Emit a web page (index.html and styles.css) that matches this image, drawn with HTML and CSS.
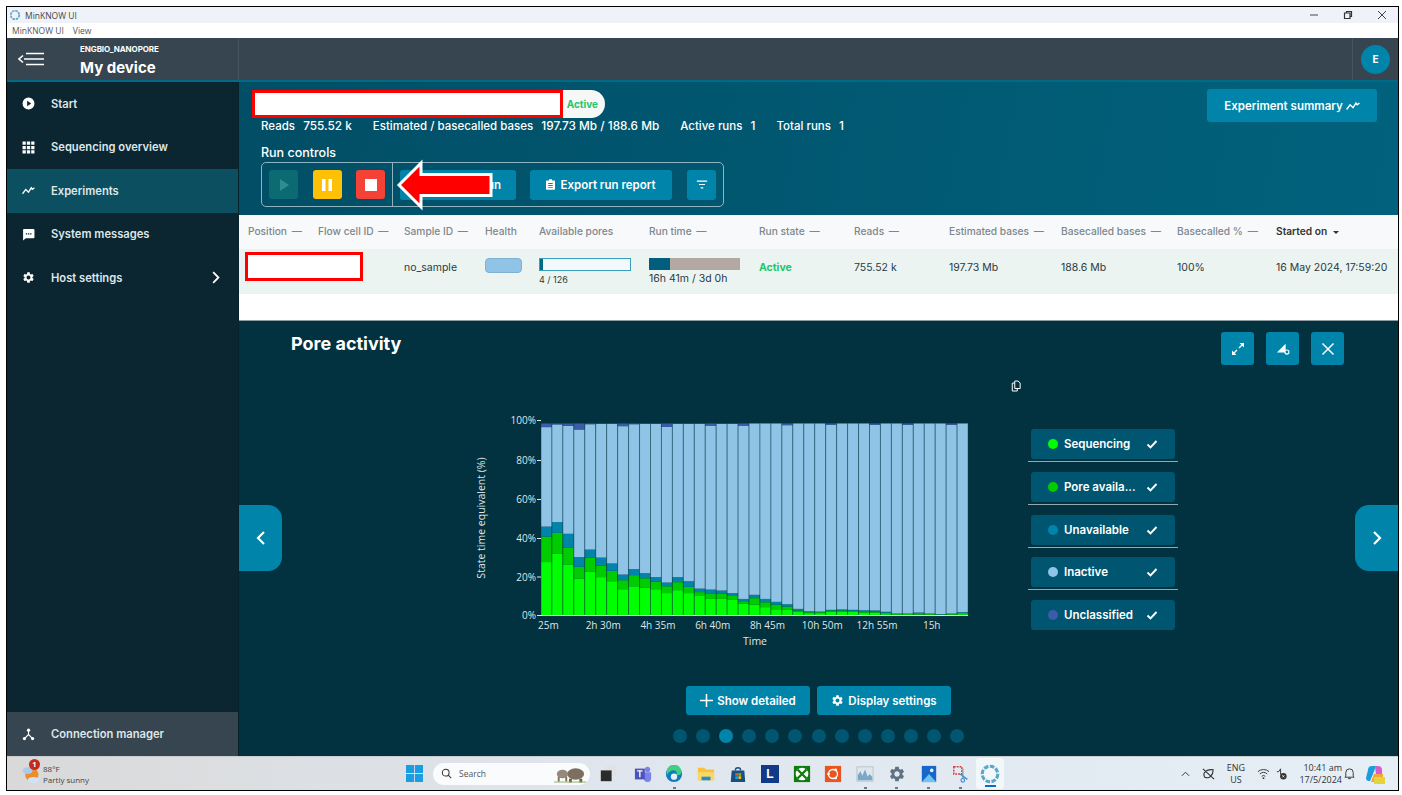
FILE: index.html
```html
<!DOCTYPE html>
<html lang="en">
<head>
<meta charset="UTF-8">
<meta name="viewport" content="width=device-width, initial-scale=1.0">
<title>MinKNOW UI</title>
<link rel="stylesheet" href="styles.css">
</head>
<body>

<svg class="sprites" aria-hidden="true">
  <symbol id="i-gear" viewBox="0 0 24 24"><path d="M19.14 12.94c.04-.3.06-.61.06-.94 0-.32-.02-.64-.07-.94l2.03-1.58c.18-.14.23-.41.12-.61l-1.92-3.32c-.12-.22-.37-.29-.59-.22l-2.39.96c-.5-.38-1.03-.7-1.62-.94l-.36-2.54c-.04-.24-.24-.41-.48-.41h-3.84c-.24 0-.43.17-.47.41l-.36 2.54c-.59.24-1.13.57-1.62.94l-2.39-.96c-.22-.08-.47 0-.59.22L2.74 8.87c-.12.21-.08.47.12.61l2.03 1.58c-.05.3-.09.63-.09.94s.02.64.07.94l-2.03 1.58c-.18.14-.23.41-.12.61l1.92 3.32c.12.22.37.29.59.22l2.39-.96c.5.38 1.03.7 1.62.94l.36 2.54c.05.24.24.41.48.41h3.84c.24 0 .44-.17.47-.41l.36-2.54c.59-.24 1.13-.56 1.62-.94l2.39.96c.22.08.47 0 .59-.22l1.92-3.32c.12-.22.07-.47-.12-.61l-2.01-1.58zM12 15.6c-1.98 0-3.6-1.62-3.6-3.6s1.62-3.6 3.6-3.6 3.6 1.62 3.6 3.6-1.62 3.6-3.6 3.6z"/></symbol>
  <symbol id="i-trend" viewBox="0 0 24 24"><path d="M1 18l6-8 5 5 5-8 2 3 4-3" fill="none" stroke="currentColor" stroke-width="2.4"/></symbol>
  <symbol id="i-check" viewBox="0 0 24 24"><path d="M3 13l6 6L21 6" fill="none" stroke="currentColor" stroke-width="3.8"/></symbol>
  <symbol id="i-ring" viewBox="0 0 24 24"><circle cx="12" cy="12" r="8.5" fill="none" stroke="#5ba9c9" stroke-width="3.4" stroke-dasharray="5 1.6"/></symbol>
</svg>

<div class="window">

  <div class="titlebar">
    <svg class="title-logo"><use href="#i-ring"/></svg>
    <span class="title-name">MinKNOW UI</span>
    <div class="win-controls">
      <svg viewBox="0 0 10 10"><path d="M1 5h8" stroke="#444" fill="none"/></svg>
      <svg viewBox="0 0 10 10"><path d="M1.5 3H7v5.5H1.5zM3.5 3V1.5h5v5H7" stroke="#333" stroke-width="1.2" fill="none"/></svg>
      <svg viewBox="0 0 10 10"><path d="M1 1l8 8M9 1l-8 8" stroke="#444" fill="none"/></svg>
    </div>
  </div>
  <div class="menubar"><span>MinKNOW UI</span><span>View</span></div>

  <header class="app-header">
    <div class="device">
      <svg class="back-icon" viewBox="0 0 26 14"><path d="M6 7h20M8 1.5h18M8 12.5h18M5 3.5L1 7l4 3.5" stroke="#fff" stroke-width="1.6" fill="none"/></svg>
      <div class="device-name">
        <small>ENGBIO_NANOPORE</small>
        <strong>My device</strong>
      </div>
    </div>
    <div class="header-space"></div>
    <div class="header-user"><span class="avatar">E</span></div>
  </header>

  <div class="app-body">
    <aside class="sidebar">
      <nav class="nav">
        <a class="nav-item">
          <svg viewBox="0 0 24 24"><path d="M12 1a11 11 0 100 22 11 11 0 000-22zM9.5 7l7.500 5-7.500 5z" fill-rule="evenodd"/></svg>
          Start
        </a>
        <a class="nav-item">
          <svg viewBox="0 0 24 24"><path d="M1 1h6v6H1zM9 1h6v6H9zM17 1h6v6h-6zM1 9h6v6H1zM9 9h6v6H9zM17 9h6v6h-6zM1 17h6v6H1zM9 17h6v6H9zM17 17h6v6h-6z"/></svg>
          Sequencing overview
        </a>
        <a class="nav-item active">
          <svg><use href="#i-trend"/></svg>
          Experiments
        </a>
        <a class="nav-item">
          <svg viewBox="0 0 24 24"><path d="M3 2h18a2 2 0 012 2v13a2 2 0 01-2 2H7l-5 4V4a2 2 0 011-2zM7 9.500V12h2.500V9.500zM11 9.500V12h2.500V9.500zM15 9.500V12h2.500V9.500z" fill-rule="evenodd"/></svg>
          System messages
        </a>
        <a class="nav-item">
          <svg><use href="#i-gear"/></svg>
          Host settings
          <svg class="nav-chevron" viewBox="0 0 12 16"><path d="M2.500 1.500L9 8l-6.500 6.500" fill="none" stroke="#fff" stroke-width="2.2"/></svg>
        </a>
      </nav>
      <a class="nav-item connection">
        <svg viewBox="0 0 24 24"><path d="M12 3v9M12 12l-7 7M12 12l7 7" stroke="#fff" stroke-width="2" fill="none"/><circle cx="12" cy="4" r="3"/><circle cx="4.500" cy="19.500" r="3"/><circle cx="19.500" cy="19.500" r="3"/></svg>
        Connection manager
      </a>
    </aside>

    <main class="main">
      <section class="summary">
        <div class="summary-top">
          <div class="summary-info">
            <div class="exp-name">
              <div class="redact redact-name"></div>
              <span class="pill">Active</span>
            </div>
            <div class="stats">
              <span><b>Reads</b> 755.52 k</span>
              <span><b>Estimated / basecalled bases</b> 197.73 Mb / 188.6 Mb</span>
              <span><b>Active runs</b> 1</span>
              <span><b>Total runs</b> 1</span>
            </div>
          </div>
          <button class="btn btn-summary">Experiment summary <svg class="ic-14"><use href="#i-trend"/></svg></button>
        </div>
        <h3 class="controls-title">Run controls</h3>
        <div class="controls">
          <div class="controls-left">
            <button class="ctl ctl-play"><svg viewBox="0 0 10 12"><path d="M1 0l9 6-9 6z"/></svg></button>
            <button class="ctl ctl-pause"><svg viewBox="0 0 12 12"><path d="M1 0h3.500v12H1zM7.500 0H11v12H7.500z"/></svg></button>
            <button class="ctl ctl-stop"><svg viewBox="0 0 12 12"><path d="M0 0h12v12H0z"/></svg></button>
          </div>
          <div class="controls-right">
            <button class="btn btn-run">Stop run</button>
            <button class="btn btn-export">
              <svg class="ic-10" viewBox="0 0 12 14"><path d="M4 0h4v1.500h3a1 1 0 011 1V13a1 1 0 01-1 1H1a1 1 0 01-1-1V2.500a1 1 0 011-1h3zM3 5v1.200h6V5zM3 7.800V9h6V7.800zM3 10.500v1.200h6v-1.200z" fill-rule="evenodd"/></svg>
              Export run report
            </button>
            <button class="btn btn-filter"><svg viewBox="0 0 14 10"><path d="M1 1h12M3.500 5h7M5.500 9h3" stroke="#fff" stroke-width="1.3" fill="none"/></svg></button>
          </div>
        </div>
        <svg class="arrow" viewBox="0 0 98 50"><path d="M4 25L26 3v11.500h70v21H26V47z" fill="#f00" stroke="#fff" stroke-width="3"/></svg>
      </section>

      <section class="runs">
        <div class="runs-row runs-head">
          <span>Position <i>—</i></span>
          <span>Flow cell ID <i>—</i></span>
          <span>Sample ID <i>—</i></span>
          <span>Health</span>
          <span>Available pores</span>
          <span>Run time <i>—</i></span>
          <span>Run state <i>—</i></span>
          <span>Reads <i>—</i></span>
          <span>Estimated bases <i>—</i></span>
          <span>Basecalled bases <i>—</i></span>
          <span>Basecalled % <i>—</i></span>
          <span class="sorted">Started on <em class="sort-caret"></em></span>
        </div>
        <div class="runs-row runs-data">
          <span><div class="redact redact-cell"></div></span>
          <span></span>
          <span>no_sample</span>
          <span><div class="health"></div></span>
          <span class="pores">
            <div class="pore-bar"><div class="pore-fill" style="width:3%"></div></div>
            <small>4 / 126</small>
          </span>
          <span class="runtime">
            <div class="time-bar"><div class="time-fill" style="width:23%"></div></div>
            <small>16h 41m / 3d 0h</small>
          </span>
          <span class="state">Active</span>
          <span>755.52 k</span>
          <span>197.73 Mb</span>
          <span>188.6 Mb</span>
          <span>100%</span>
          <span>16 May 2024, 17:59:20</span>
        </div>
      </section>

      <section class="pore">
        <div class="pore-head">
          <h2>Pore activity</h2>
          <div class="tools">
            <button class="btn tool"><svg viewBox="0 0 14 14"><path d="M8 6l4.500-4.500M6 8l-4.500 4.500" stroke="#fff" stroke-width="1.4"/><path d="M8.500 1H13v4.500zM5.500 13H1V8.500z" fill="#fff"/></svg></button>
            <button class="btn tool"><svg viewBox="0 0 16 14"><path d="M1 11L11 1v10z" fill="#fff"/><circle cx="12.500" cy="10.500" r="2.300" fill="#0084a9" stroke="#fff" stroke-width="1.3"/></svg></button>
            <button class="btn tool"><svg viewBox="0 0 14 14"><path d="M1.500 1.500l11 11M12.500 1.500l-11 11" stroke="#fff" stroke-width="1.5"/></svg></button>
          </div>
        </div>
        <div class="copy-row">
          <svg viewBox="0 0 12 14"><path d="M4.500 1h4L11 3.500V10H4.500zM4.500 3.500h-3V13h6v-3" fill="none" stroke="#fff" stroke-width="1.2"/></svg>
        </div>
        <div class="chart-row">
          <svg id="chart" class="chart" width="558" height="240" viewBox="470 410 558 240"></svg>
          <div class="legend">
            <div class="legend-item"><span class="dot dot-seq"></span><span class="legend-name">Sequencing</span><svg><use href="#i-check"/></svg></div>
            <div class="legend-item"><span class="dot dot-pore"></span><span class="legend-name">Pore availa...</span><svg><use href="#i-check"/></svg></div>
            <div class="legend-item"><span class="dot dot-unav"></span><span class="legend-name">Unavailable</span><svg><use href="#i-check"/></svg></div>
            <div class="legend-item"><span class="dot dot-inac"></span><span class="legend-name">Inactive</span><svg><use href="#i-check"/></svg></div>
            <div class="legend-item"><span class="dot dot-uncl"></span><span class="legend-name">Unclassified</span><svg><use href="#i-check"/></svg></div>
          </div>
        </div>
        <div class="pore-actions">
          <button class="btn btn-act btn-detailed"><svg class="ic-12" viewBox="0 0 12 12"><path d="M6 0v12M0 6h12" stroke="#fff" stroke-width="1.4"/></svg>Show detailed</button>
          <button class="btn btn-act btn-display"><svg class="ic-12"><use href="#i-gear"/></svg>Display settings</button>
        </div>
        <div class="dots">
          <span></span><span></span><span class="on"></span><span></span><span></span><span></span><span></span><span></span><span></span><span></span><span></span><span></span><span></span>
        </div>
        <button class="side-arrow side-left"><svg viewBox="0 0 10 16"><path d="M8 2L2 8l6 6" fill="none" stroke="#fff" stroke-width="2.2"/></svg></button>
        <button class="side-arrow side-right"><svg viewBox="0 0 10 16"><path d="M2 2l6 6-6 6" fill="none" stroke="#fff" stroke-width="2.2"/></svg></button>
      </section>
    </main>
  </div>

  <footer class="taskbar">
    <div class="weather">
      <svg class="weather-icon" viewBox="0 0 24 24"><circle cx="13" cy="13" r="8" fill="#ef8b2c"/><ellipse cx="8" cy="8" rx="6" ry="4" fill="#a9cde8"/><ellipse cx="15" cy="19" rx="7" ry="3.500" fill="#cfe3f3"/></svg>
      <span class="weather-badge">1</span>
      <div class="weather-text"><span>88°F</span><span>Partly sunny</span></div>
    </div>
    <div class="task-center">
      <svg class="tb-win" viewBox="0 0 20 20"><path d="M0 0h9.500v9.500H0zM10.500 0H20v9.500h-9.500zM0 10.500h9.500V20H0zM10.500 10.500H20V20h-9.500z" fill="#1b9de2"/></svg>
      <div class="tb-search">
        <svg viewBox="0 0 14 14"><circle cx="6" cy="6" r="4.300" fill="none" stroke="#333" stroke-width="1.3"/><path d="M9.200 9.200L13 13" stroke="#333" stroke-width="1.3"/></svg>
        <span>Search</span>
        <svg class="elephant" viewBox="0 0 34 18"><ellipse cx="23" cy="9" rx="9" ry="6" fill="#7d6f60"/><path d="M16 14h3v4h-3zM27 14h3v4h-3z" fill="#6a5d50"/><ellipse cx="9" cy="9" rx="6" ry="4.500" fill="#96897a"/><path d="M4 12h2v5H4zM12 12h2v5h-2z" fill="#7d6f60"/><path d="M0 17h34v1H0z" fill="#8cae5a"/></svg>
      </div>
      <svg class="tb-icon tb-view" viewBox="0 0 20 20"><path d="M7 1h12v12H7z" fill="#e2e2e2"/><path d="M2 6h12v12H2z" fill="#2b2b2b"/></svg>
      <svg class="tb-icon" viewBox="0 0 20 20"><circle cx="15" cy="5" r="3" fill="#7b83eb"/><path d="M11 8h8v7a4 4 0 01-8 0z" fill="#7b83eb"/><path d="M1 4h11v12H1z" fill="#4b53bc"/><path d="M3.500 6.500h6M6.500 6.500v7" stroke="#fff" stroke-width="1.5"/></svg>
      <span class="tb-slot running"><svg class="tb-icon" viewBox="0 0 20 20"><circle cx="10" cy="10" r="9" fill="#0c7cc4"/><path d="M2 8a8 8 0 0116-1c1 4-3 5-6 4 3-3-1-6-4-5-3 1-5 3-6 6z" fill="#40d07f"/><circle cx="10" cy="13" r="3.500" fill="#e8f0f5"/></svg></span>
      <svg class="tb-icon" viewBox="0 0 20 20"><path d="M1 3h7l2 2h9v12H1z" fill="#f7c33c"/><path d="M1 8h18v9H1z" fill="#fbd768"/><path d="M5 13h10v4H5z" fill="#1b8ed4"/></svg>
      <svg class="tb-icon" viewBox="0 0 20 20"><path d="M3 6h14l1 12a1 1 0 01-1 1H3a1 1 0 01-1-1z" fill="#1a4f86"/><path d="M7 6a3 3 0 016 0" fill="none" stroke="#1a4f86" stroke-width="1.5"/><path d="M7 9h3v3H7z" fill="#f25022"/><path d="M10.500 9h3v3h-3z" fill="#7fba00"/><path d="M7 12.500h3v3H7z" fill="#00a4ef"/><path d="M10.500 12.500h3v3h-3z" fill="#ffb900"/></svg>
      <span class="tb-square tb-l">L</span>
      <svg class="tb-icon" viewBox="0 0 20 20"><path d="M1 1h18v18H1z" fill="#107c10"/><circle cx="10" cy="10" r="7" fill="#fff"/><path d="M5 5l10 10M15 5L5 15" stroke="#107c10" stroke-width="2.6"/></svg>
      <svg class="tb-icon" viewBox="0 0 20 20"><path d="M1 1h18v18H1z" fill="#e95420"/><circle cx="10" cy="10" r="5" fill="none" stroke="#fff" stroke-width="1.5"/><circle cx="5" cy="10" r="1.500" fill="#fff"/><circle cx="13" cy="5.500" r="1.500" fill="#fff"/><circle cx="13" cy="14.500" r="1.500" fill="#fff"/></svg>
      <span class="tb-slot running"><svg class="tb-icon" viewBox="0 0 20 20"><path d="M1 2h18v16H1z" fill="#dde7ee" stroke="#9ab" stroke-width=".6"/><path d="M2 17v-6l3-4 2 5 3-7 3 8 2-3 3 3v4z" fill="#7ba7c7"/></svg></span>
      <span class="tb-slot running"><svg class="tb-icon tb-gear"><use href="#i-gear"/></svg></span>
      <span class="tb-slot running"><svg class="tb-icon" viewBox="0 0 20 20"><path d="M2 1h16v18H2z" fill="#1667c7"/><path d="M2 19l8-9 8 9z" fill="#6fc3f2"/><circle cx="13" cy="6" r="2" fill="#e8f4fc"/></svg></span>
      <span class="tb-slot running"><svg class="tb-icon" viewBox="0 0 20 20"><path d="M2 2h9v8H2z" fill="none" stroke="#d33" stroke-width="1.6" stroke-dasharray="2 1.2"/><path d="M12 4v11" stroke="#999" stroke-width="1.5"/><path d="M9 10l8 6" stroke="#3b8fd0" stroke-width="1.5"/><circle cx="12" cy="17" r="2" fill="none" stroke="#3b8fd0" stroke-width="1.3"/></svg></span>
      <span class="tb-slot current"><svg class="tb-icon"><use href="#i-ring"/></svg></span>
    </div>
    <div class="tray">
      <svg class="tray-caret" viewBox="0 0 10 6"><path d="M1 5l4-4 4 4" fill="none" stroke="#333" stroke-width="1.1"/></svg>
      <svg class="tray-ic tray-shield" viewBox="0 0 14 14"><path d="M3 11c-3-5 2-9 9-8 0 6-4 10-9 8zM1 2l12 11" fill="none" stroke="#333" stroke-width="1.2"/></svg>
      <div class="tray-lang"><span>ENG</span><span>US</span></div>
      <svg class="tray-ic tray-wifi" viewBox="0 0 14 14"><path d="M1 5a9 9 0 0112 0M3 7.500a6 6 0 018 0M5 10a3 3 0 014 0" fill="none" stroke="#333"/><circle cx="7" cy="12" r="1" fill="#333"/></svg>
      <svg class="tray-ic tray-vol" viewBox="0 0 14 14"><path d="M2 5h2l2-3v6" fill="none" stroke="#333"/><circle cx="9" cy="10" r="3.500" fill="#333"/><path d="M7.800 8.800l2.400 2.400M10.200 8.800l-2.400 2.400" stroke="#fff" stroke-width=".8"/></svg>
      <div class="tray-time"><span>10:41 am</span><span>17/5/2024</span></div>
      <svg class="tray-ic tray-bell" viewBox="0 0 14 14"><path d="M3 10V6a4 4 0 018 0v4l1 1H2zM5.500 12.500h3" fill="none" stroke="#333"/></svg>
      <svg class="tray-copilot" viewBox="0 0 20 20"><path d="M3 6a4 4 0 014-4h4l-3 8-3 7H4a3 3 0 01-3-3z" fill="#1f9ce0"/><path d="M10 2h3a4 4 0 014 4v5h-6z" fill="#d65fd0"/><path d="M9 10h9v5a3 3 0 01-3 3H6z" fill="#f5a43a"/><path d="M9 13h11v7H9z" fill="#e5d33c"/></svg>
    </div>
  </footer>
</div>

<script src="chart.js"></script>
</body>
</html>
```

FILE: styles.css
```css
* {margin: 0; padding: 0; box-sizing: border-box;}
html, body {height: 100%; overflow: hidden;}
body {background: #fff; font-family: "Inter", "Liberation Sans", sans-serif; color: #fff;}
button {font-family: inherit; font-size: 11.5px; border: none; color: #fff; cursor: pointer;}
svg {display: block; flex: none;}
.sprites {position: absolute; width: 0; height: 0;}

.window {
  position: absolute; left: 6px; top: 6px; width: 1393px; height: 785px;
  border: 1px solid #000; display: flex; flex-direction: column; background: #02313f; overflow: hidden;
}

/* windows chrome */
.titlebar {
  height: 16px; background: #f0f2f9; display: flex; align-items: center; padding-left: 2px;
  font-family: "Open Sans", sans-serif; font-size: 8.5px; color: #444;
}
.title-logo {width: 12px; height: 12px; margin-right: 4px;}
.win-controls {margin-left: auto; display: flex; gap: 24px; padding-right: 11px;}
.win-controls svg {width: 10px; height: 10px;}
.menubar {
  height: 15px; background: #fff; display: flex; align-items: center; gap: 9px; padding-left: 5px;
  font-family: "Open Sans", sans-serif; font-size: 8.5px; color: #555;
}

/* header */
.app-header {height: 44px; background: #36454f; border-bottom: 2px solid #016a85; display: flex; flex: none;}
.device {width: 232px; display: flex; align-items: center; border-right: 1px solid #45545e;}
.back-icon {width: 26px; height: 14px; margin-left: 11px; margin-right: 36px;}
.device-name {display: flex; flex-direction: column; gap: 4px; padding-top: 4px;}
.device-name small {font-size: 8px; font-weight: 700; line-height: 9px; letter-spacing: -.1px;}
.device-name strong {font-size: 15px; font-weight: 700; line-height: 19px;}
.header-space {flex: 1;}
.header-user {width: 46px; border-left: 1px solid #45545e; display: flex; align-items: center; justify-content: center;}
.avatar {width: 29px; height: 29px; border-radius: 50%; background: #0084a9; font-size: 10px; font-weight: 700; display: flex; align-items: center; justify-content: center;}

/* sidebar */
.app-body {flex: 1; display: flex; min-height: 0;}
.sidebar {width: 232px; flex: none; background: #0b2630; display: flex; flex-direction: column; justify-content: space-between; border-right: 1px solid #08222b;}
.nav-item {
  height: 43.5px; display: flex; align-items: center; padding-left: 15px; gap: 16px;
  font-size: 11.2px; font-weight: 600; color: #dfe7ea;
}
.nav-item svg {width: 13px; height: 13px; fill: #fff; color: #fff;}
.nav-item.active {background: #0b4f60;}
.nav-item .nav-chevron {width: 10px; height: 13px; margin-left: auto; margin-right: 17px;}
.connection {height: 44px; background: #36454f;}

/* main */
.main {flex: 1; min-width: 0; display: flex; flex-direction: column; background: #fff;}
.summary {position: relative; height: 133px; flex: none; padding: 8px 21px 0 22px; background: linear-gradient(100deg, #014e66, #01627d); font-size: 11.8px;}
.summary-top {display: flex; justify-content: space-between;}
.exp-name {display: flex; height: 28px; margin-left: -9px;}
.redact {background: #fff; border: 3px solid #f00;}
.redact-name {width: 311px; height: 28px; position: relative; z-index: 1;}
.pill {width: 45px; margin-left: -3px; background: #f6f8f7; border-radius: 0 14px 14px 0; color: #22c66b; font-size: 10px; font-weight: 700; display: flex; align-items: center; justify-content: flex-end; padding: 0 7px 1px 0;}
.stats {display: flex; gap: 21px; margin-top: 1px; line-height: 15px; font-weight: 500;}
.stats b {font-size: 11.5px; font-weight: 500; margin-right: 5px;}
.btn {background: #0084a9; border-radius: 3px; font-weight: 600; display: flex; align-items: center; justify-content: center;}
.btn-summary {width: 170px; height: 33px; gap: 3px; margin-top: -1px;}
.ic-14 {width: 14px; height: 14px;}
.ic-10 {width: 9px; height: 11px; fill: #fff;}
.ic-12 {width: 13px; height: 13px; fill: #fff;}
.controls-title {font-size: 12.5px; font-weight: 500; line-height: 16px; margin-top: 11px;}
.controls {width: 463px; height: 45px; margin-top: 1px; border: 1px solid #8fb3c0; border-radius: 5px; display: flex; align-items: center;}
.controls-left {width: 131px; height: 100%; display: flex; align-items: center; gap: 14.5px; padding-left: 7px; border-right: 1px solid #8fb3c0;}
.ctl {width: 29px; height: 29px; border-radius: 3px; display: flex; align-items: center; justify-content: center;}
.ctl svg {width: 12px; height: 12px; fill: #fff;}
.ctl-play {background: #0c6a72;}
.ctl-play svg {fill: #2f8d92;}
.ctl-pause {background: #ffc107;}
.ctl-stop {background: #f44336;}
.controls-right {flex: 1; display: flex; align-items: center; padding-left: 7px;}
.btn-run {width: 116px; height: 30px; justify-content: flex-end; padding-right: 15px;}
.btn-export {width: 142px; height: 30px; margin-left: 14px; gap: 5px;}
.btn-filter {width: 29px; height: 30px; margin-left: 15px;}
.btn-filter svg {width: 12px; height: 9px;}
.arrow {position: absolute; left: 156px; top: 78px; width: 98px; height: 50px; overflow: visible;}

/* table */
.runs {height: 105px; flex: none; background: #fff; color: #2b3a42; font-size: 10.5px;}
.runs-row {display: grid; grid-template-columns: 70px 86px 81px 54px 110px 110px 95px 95px 112px 116px 99px 1fr; padding-left: 9px;}
.runs-head {height: 35px; background: #f8f9fb; border-bottom: 1px solid #eef0f2; color: #7d878d; font-size: 10.2px; font-weight: 500; align-items: center; padding-bottom: 2px;}
.runs-head i {font-style: normal; margin-left: 2px;}
.runs-head .sorted {color: #333; font-weight: 600;}
.sort-caret {display: inline-block; width: 0; height: 0; margin-left: 3px; vertical-align: middle; border: 3px solid transparent; border-top: 3px solid #333; border-bottom: 0;}
.runs-data {height: 44px; background: #ebf4f1; padding-top: 8px; line-height: 20px; align-items: start;}
.runs-data small {display: block; font-size: 9px; line-height: 12px; margin-top: 3px;}
.redact-cell {width: 118px; height: 29px; margin: -6px 0 0 -3px;}
.health {width: 37px; height: 15px; background: #8fc4e6; border: 1px solid #7fb2d2; border-radius: 4px;}
.pore-bar {width: 92px; height: 13px; background: #f3f9fb; border: 1px solid #3a9fbd;}
.pore-fill {height: 100%; background: #006a8a;}
.time-bar {width: 91px; height: 12px; background: #b3a9a2;}
.time-fill {height: 100%; background: #015e7c;}
.runtime small {font-size: 10.5px;}
.state {color: #22c66b; font-weight: 700;}

/* pore activity */
.pore {position: relative; flex: 1; background: #02313f; border-top: 1px solid #8d9da3;}
.pore-head {display: flex; justify-content: space-between; padding: 11px 54px 0 52px;}
.pore-head h2 {font-size: 18px; font-weight: 700; line-height: 22px; margin-top: 1px;}
.tools {display: flex; gap: 12px;}
.tool {width: 33px; height: 33px;}
.tool svg {width: 14px; height: 14px;}
.copy-row {height: 45px; padding: 15px 0 0 772px;}
.copy-row svg {width: 10px; height: 12px;}
.chart-row {display: flex; height: 240px; padding-left: 231px;}
.legend {display: flex; flex-direction: column; margin-top: 19px;}
.legend-item {position: relative; width: 144px; height: 30px; margin: 0 3px 12.8px; background: #005670; border-radius: 3px; display: flex; align-items: center; padding-left: 17px; font-size: 11.5px; font-weight: 600;}
.legend-item:not(:last-child)::after {content: ""; position: absolute; left: -3px; right: -3px; bottom: -3px; border-bottom: 1px solid #93a9b1;}
.legend-item svg {width: 12px; height: 12px; color: #fff; position: absolute; right: 17px;}
.legend-name {margin-left: 6px;}
.dot {width: 10px; height: 10px; border-radius: 50%;}
.dot-seq {background: #00ff00;}
.dot-pore {background: #00cc00;}
.dot-unav {background: #0084a9;}
.dot-inac {background: #8fc4e6;}
.dot-uncl {background: #3b5ca8;}
.pore-actions {display: flex; justify-content: center; gap: 7px; margin-top: 36px;}
.btn-act {height: 29px; gap: 4px;}
.btn-detailed {width: 124px;}
.btn-display {width: 134px;}
.dots {display: flex; justify-content: center; gap: 9.1px; margin-top: 14px;}
.dots span {width: 14px; height: 14px; border-radius: 50%; background: #005670;}
.dots .on {background: #0084a9;}
.side-arrow {position: absolute; top: 184px; width: 43px; height: 66px; background: #0084a9; display: flex; align-items: center; justify-content: center;}
.side-arrow svg {width: 10px; height: 16px;}
.side-left {left: 0; border-radius: 0 14px 14px 0;}
.side-right {right: 0; border-radius: 14px 0 0 14px;}

/* taskbar */
.taskbar {
  height: 34px; flex: none; display: flex; align-items: center; position: relative;
  background: linear-gradient(90deg, #d9d9d9, #dfe5ec 40%, #e6eff6); color: #333;
  font-family: "Open Sans", sans-serif; border-top: 1px solid #c8cdd0;
}
.weather {width: 399px; flex: none; display: flex; align-items: center; padding-left: 14px; position: relative;}
.weather-icon {width: 20px; height: 22px;}
.weather-badge {position: absolute; left: 22px; top: -4px; width: 11px; height: 11px; border-radius: 50%; background: #c42b1c; color: #fff; font-size: 7.5px; text-align: center; line-height: 11px; font-weight: 700;}
.weather-text {display: flex; flex-direction: column; font-size: 8px; margin-left: 2px; line-height: 11px; color: #444;}
.task-center {display: flex; align-items: center; height: 100%;}
.tb-win {width: 17px; height: 17px; margin-right: 10px;}
.tb-search {width: 157px; height: 22px; border-radius: 11px; background: #fafbfc; display: flex; align-items: center; padding: 0 4px 0 8px; font-size: 8.5px; color: #555; gap: 7px; margin-right: 2px;}
.tb-search > svg {width: 11px; height: 11px;}
.tb-search .elephant {width: 32px; height: 18px; margin-left: auto;}
.tb-slot {width: 31.8px; height: 100%; display: flex; align-items: center; justify-content: center; position: relative;}
.task-center > .tb-icon, .tb-square {margin: 0 6.9px;}
.task-center > .tb-view {margin-right: 9.9px;}
.tb-icon {width: 18px; height: 18px;}
.tb-gear {fill: #5f7285;}
.tb-square {width: 18px; height: 18px; background: #123a88; color: #fff; font-size: 12px; font-weight: 700; font-family: "Liberation Sans", sans-serif; display: flex; align-items: center; justify-content: center;}
.running::after {content: ""; position: absolute; bottom: 1px; width: 3px; height: 2px; background: #777;}
.current {width: 28px; height: 31px; background: #f2f7fa; border-radius: 3px;}
.current::after {content: ""; position: absolute; bottom: 2px; width: 11px; height: 2px; background: #0a6cc4;}
.current .tb-icon {width: 22px; height: 22px;}
.tray {margin-left: auto; display: flex; align-items: center; padding-right: 13px; font-size: 9px; color: #333;}
.tray-caret {width: 9px; height: 6px;}
.tray-ic {width: 13px; height: 13px;}
.tray-shield {margin-left: 12px;}
.tray-lang {width: 22px; display: flex; flex-direction: column; align-items: center; line-height: 12px; margin-left: 10.5px;}
.tray-wifi {margin-left: 9.5px;}
.tray-vol {margin-left: 5px;}
.tray-time {width: 44px; display: flex; flex-direction: column; align-items: flex-end; line-height: 12px; margin-left: 10.5px; white-space: nowrap;}
.tray-bell {margin-left: .5px;}
.tray-copilot {width: 20px; height: 20px; margin-left: 9.5px;}
```

FILE: chart.js
```js
// [sequencing, pore available, unavailable, inactive] tops, in percent
const bars = [
  [27.4,40.5,45.6,96.6],[31.6,42.4,47.9,98],[26.2,34.9,41.9,97.3],[19,25,30,95.4],[22.6,29.6,33.8,98.1],
  [19.7,25.6,29.7,98.3],[17.6,22.9,26.7,98.3],[13.5,18.1,21,97.1],[15,20.7,23.8,98.1],[14.2,19.1,21.7,98.3],
  [13.5,17.4,19.7,98.3],[11.5,15,16.9,96.7],[13,17.1,19.7,98.3],[11.5,14.7,17.6,98.3],[10,12,13.8,98.3],
  [8.5,11.1,13.3,97.4],[8.5,11.3,12.8,98.3],[8,10,11.5,98.3],[6,7.3,8.5,97.4],[5.6,8.9,10.6,98.6],
  [4.3,6.8,8.5,98.6],[3.2,5.6,7,98.6],[2.9,4.6,5.8,97.6],[1.9,2.6,3.4,98.6],[1.2,1.7,2.2,98.6],
  [1.2,1.7,2,98.6],[1.9,2.6,2.9,97.8],[1.9,2.6,3.1,98.6],[1.9,2.4,2.9,98.6],[1.5,2.2,2.7,98.6],
  [1.4,2,2.6,97.8],[.7,1.4,1.9,98.6],[.3,.9,1,98.6],[.2,.9,1,97.8],[.5,1.2,1.5,98.6],
  [.3,.9,1,98.6],[.2,.5,.7,98.6],[.5,.9,1,97.8],[.7,1.4,1.7,98.6]
];
const colors = ["#00ff00", "#00cc00", "#0084a9", "#8fc4e6", "#3b5ca8"];
const yTicks = [[0, 615], [20, 576.5], [40, 538], [60, 499], [80, 460], [100, 420]];
const xTicks = [["25m", 0], ["2h 30m", 5], ["4h 35m", 10], ["6h 40m", 15], ["8h 45m", 20], ["10h 50m", 25], ["12h 55m", 30], ["15h", 35]];

const left = 541, pitch = 10.95, base = 615.5, scale = 1.95;
let out = "";

bars.forEach((b, i) => {
  const tops = [...b, 98.6];
  let prev = 0;
  tops.forEach((top, c) => {
    if (top <= prev) return;
    const y = base - top * scale, h = (top - prev) * scale;
    out += `<rect x="${left + i * pitch}" y="${y}" width="${pitch}" height="${h}" fill="${colors[c]}"/>`;
    prev = top;
  });
  out += `<rect x="${left + i * pitch}" y="${base - 98.6 * scale}" width="${pitch}" height="${98.6 * scale}" fill="none" stroke="#02313f" stroke-opacity=".42"/>`;
});

out += `<path d="M537 ${base}H968" stroke="#dfe7ea"/>`;
yTicks.forEach(([label, y]) => {
  out += `<path d="M537 ${y + .5}h4" stroke="#dfe7ea"/>`;
  out += `<text x="536" y="${y + 4}" text-anchor="end">${label}%</text>`;
});
xTicks.forEach(([label, i]) => {
  out += `<text x="${left + (i + .5) * pitch + 2}" y="629" text-anchor="middle">${label}</text>`;
});
out += `<text x="755" y="645" text-anchor="middle" class="axis">Time</text>`;
out += `<text transform="translate(485 518) rotate(-90)" text-anchor="middle" class="axis">State time equivalent (%)</text>`;

document.getElementById("chart").innerHTML =
  `<style>text{font:10px "Open Sans",sans-serif;fill:#dfe7ea}.axis{font-size:10.5px}</style>` + out;
```
